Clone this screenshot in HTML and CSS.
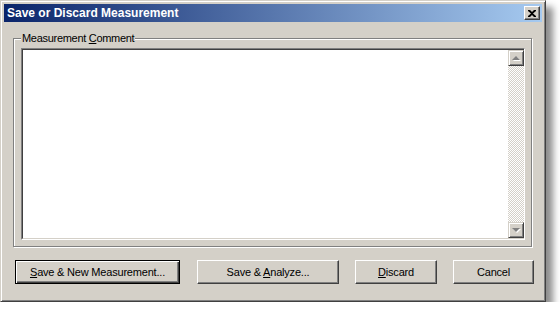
FILE: index.html
```html
<!DOCTYPE html>
<html lang="en">

<head>
    <meta charset="UTF-8">
    <title>Save or Discard Measurement</title>
    <link rel="stylesheet" href="styles.css">
</head>

<body>
    <div class="window">
        <div class="titlebar">
            <span class="title">Save or Discard Measurement</span>
            <button class="close" title="Close">
                <svg width="8" height="7" viewBox="0 0 8 7">
                    <path d="M0 0h2l2 2 2-2h2v1L5 3.5 8 6v1H6L4 5 2 7H0V6l3-2.5L0 1z" fill="#000" />
                </svg>
            </button>
        </div>
        <fieldset class="group">
            <legend>Measurement <u>C</u>omment</legend>
            <div class="memo">
                <div class="memo-text" contenteditable="true"></div>
                <div class="scrollbar">
                    <div class="arrow up"><span></span></div>
                    <div class="track"></div>
                    <div class="arrow down"><span></span></div>
                </div>
            </div>
        </fieldset>
        <div class="actions">
            <button class="btn default btn-new"><u>S</u>ave &amp; New Measurement...</button>
            <button class="btn btn-analyze">Save &amp; <u>A</u>nalyze...</button>
            <button class="btn btn-discard"><u>D</u>iscard</button>
            <button class="btn btn-cancel">Cancel</button>
        </div>
    </div>
</body>

</html>
```

FILE: styles.css
```css
body {
    margin: 0;
    background: #fff;
    font-family: 'Liberation Sans', Arial, sans-serif;
    font-size: 11px;
}

.window {
    width: 546px;
    height: 302px;
    box-sizing: border-box;
    background: #d4d0c8;
    border: 1px solid;
    border-color: #d4d0c8 #404040 #404040 #d4d0c8;
    box-shadow: inset 1px 1px 0 #fff, inset -1px -1px 0 #808080, 7px 7px 7px rgba(0, 0, 0, 0.45);
    padding: 3px 3px;
    display: flex;
    flex-direction: column;
}

.titlebar {
    height: 18px;
    background: linear-gradient(90deg, #0a246a 0%, #a6caf0 100%);
    display: flex;
    align-items: center;
    justify-content: space-between;
    padding: 0 2px 0 3px;
}

.title {
    color: #fff;
    font-weight: bold;
    font-size: 12px;
}

.close {
    width: 16px;
    height: 14px;
    padding: 0;
    background: #d4d0c8;
    border: 1px solid;
    border-color: #fff #404040 #404040 #fff;
    box-shadow: inset -1px -1px 0 #808080;
    display: flex;
    align-items: center;
    justify-content: center;
}

.group {
    margin: 10px 10px 0 9px;
    padding: 0 6px 5px 7px;
    height: 215px;
    box-sizing: border-box;
    border: 1px solid #808080;
    box-shadow: 1px 1px 0 #fff, inset 1px 1px 0 #fff;
    min-width: 0;
}

.group legend {
    padding: 0 1px;
    margin-left: 0;
    background: #d4d0c8;
    color: #000;
    font-size: 11px;
    line-height: 13px;
    letter-spacing: -0.3px;
}

.memo {
    height: 192px;
    box-sizing: border-box;
    margin-top: 3px;
    display: flex;
    border: 1px solid;
    border-color: #808080 #fff #fff #808080;
}

.memo-text {
    flex: 1;
    background: #fff;
    border: 1px solid;
    border-color: #404040 #d4d0c8 #d4d0c8 #404040;
    border-right: none;
    outline: none;
}

.scrollbar {
    width: 16px;
    display: flex;
    flex-direction: column;
    border-top: 1px solid #404040;
    border-bottom: 1px solid #d4d0c8;
}

.arrow {
    height: 16px;
    box-sizing: border-box;
    background: #d4d0c8;
    border: 1px solid;
    border-color: #d4d0c8 #404040 #404040 #d4d0c8;
    box-shadow: inset 1px 1px 0 #fff, inset -1px -1px 0 #808080;
    display: flex;
    align-items: center;
    justify-content: center;
}

.arrow span {
    width: 0;
    height: 0;
    border-left: 4px solid transparent;
    border-right: 4px solid transparent;
    filter: drop-shadow(1px 1px 0 #fff);
}

.arrow.up span {
    border-bottom: 4px solid #808080;
}

.arrow.down span {
    border-top: 4px solid #808080;
}

.track {
    flex: 1;
    background-color: #fff;
    background-image:
        linear-gradient(45deg, #d4d0c8 25%, transparent 25%, transparent 75%, #d4d0c8 75%),
        linear-gradient(45deg, #d4d0c8 25%, transparent 25%, transparent 75%, #d4d0c8 75%);
    background-size: 2px 2px;
    background-position: 0 0, 1px 1px;
}

.actions {
    display: flex;
    margin: 13px 0 0 11px;
    gap: 16px;
}

.btn {
    height: 24px;
    padding: 0;
    font-family: 'Liberation Sans', Arial, sans-serif;
    font-size: 11px;
    letter-spacing: -0.2px;
    color: #000;
    background: #d4d0c8;
    border: 1px solid;
    border-color: #fff #404040 #404040 #fff;
    box-shadow: inset -1px -1px 0 #808080;
}

.btn.default {
    border: 1px solid #000;
    box-shadow: inset 1px 1px 0 #fff, inset -1px -1px 0 #404040, inset -2px -2px 0 #808080;
}

.btn-new {
    width: 165px;
    margin-right: 1px;
}

.btn-analyze {
    width: 142px;
}

.btn-discard {
    width: 82px;
}

.btn-cancel {
    width: 81px;
}
```
